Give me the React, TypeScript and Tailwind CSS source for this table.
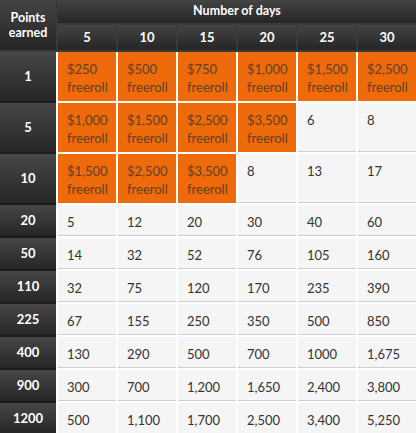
import React from "react";

const days = ["5", "10", "15", "20", "25", "30"];

type Row = { label: string; tall: boolean; cells: string[] };

const rows: Row[] = [
  { label: "1", tall: true, cells: ["$250", "$500", "$750", "$1,000", "$1,500", "$2,500"] },
  { label: "5", tall: true, cells: ["$1,000", "$1,500", "$2,500", "$3,500", "6", "8"] },
  { label: "10", tall: true, cells: ["$1,500", "$2,500", "$3,500", "8", "13", "17"] },
  { label: "20", tall: false, cells: ["5", "12", "20", "30", "40", "60"] },
  { label: "50", tall: false, cells: ["14", "32", "52", "76", "105", "160"] },
  { label: "110", tall: false, cells: ["32", "75", "120", "170", "235", "390"] },
  { label: "225", tall: false, cells: ["67", "155", "250", "350", "500", "850"] },
  { label: "400", tall: false, cells: ["130", "290", "500", "700", "1000", "1,675"] },
  { label: "900", tall: false, cells: ["300", "700", "1,200", "1,650", "2,400", "3,800"] },
  { label: "1200", tall: false, cells: ["500", "1,100", "1,700", "2,500", "3,400", "5,250"] },
];

const hdr = "bg-gradient-to-b from-[#444444] to-[#252525] text-white font-bold flex items-center justify-center";

export default function App() {
  return (
    <div
      className="w-[416px] h-[433px] overflow-hidden bg-white"
      style={{ fontFamily: "Lato, 'Open Sans', sans-serif" }}
    >
      <div className="grid grid-cols-[56px_repeat(6,58px)] grid-rows-[23px_25px] gap-[2px] pb-[2px] bg-[#3a3a3a]">
        <div className={`${hdr} row-span-2 flex-col leading-[15px] text-[12.5px]`}>
          <span>Points</span>
          <span>earned</span>
        </div>
        <div className={`${hdr} col-span-6 text-[12.5px] pb-[1px]`}>Number of days</div>
        {days.map((d) => (
          <div key={d} className={`${hdr} text-[13px] pt-[1px]`}>
            {d}
          </div>
        ))}
      </div>
      {rows.map((r) => (
        <div
          key={r.label}
          className={`grid grid-cols-[56px_repeat(6,60px)] ${r.tall ? "h-[51px]" : "h-[33px]"}`}
        >
          <div className="border-b-2 border-[#1c1c1c] bg-gradient-to-b from-[#474747] to-[#262626] text-white font-bold text-[13px] flex items-center justify-center">
            {r.label}
          </div>
          {r.cells.map((c, i) => {
            const orange = c.startsWith("$");
            return (
              <div
                key={i}
                className={`border-l-2 border-b-2 border-white pl-[9px] pt-[8px] text-[13px] leading-[18px] ${
                  orange
                    ? "bg-[#ee6a0b] text-[#5a4424]"
                    : "bg-[#f5f5f5] text-[#333333] shadow-[inset_0_-1px_0_#cdcdcd]"
                }`}
              >
                <div>{c}</div>
                {orange && <div>freeroll</div>}
              </div>
            );
          })}
        </div>
      ))}
    </div>
  );
}
